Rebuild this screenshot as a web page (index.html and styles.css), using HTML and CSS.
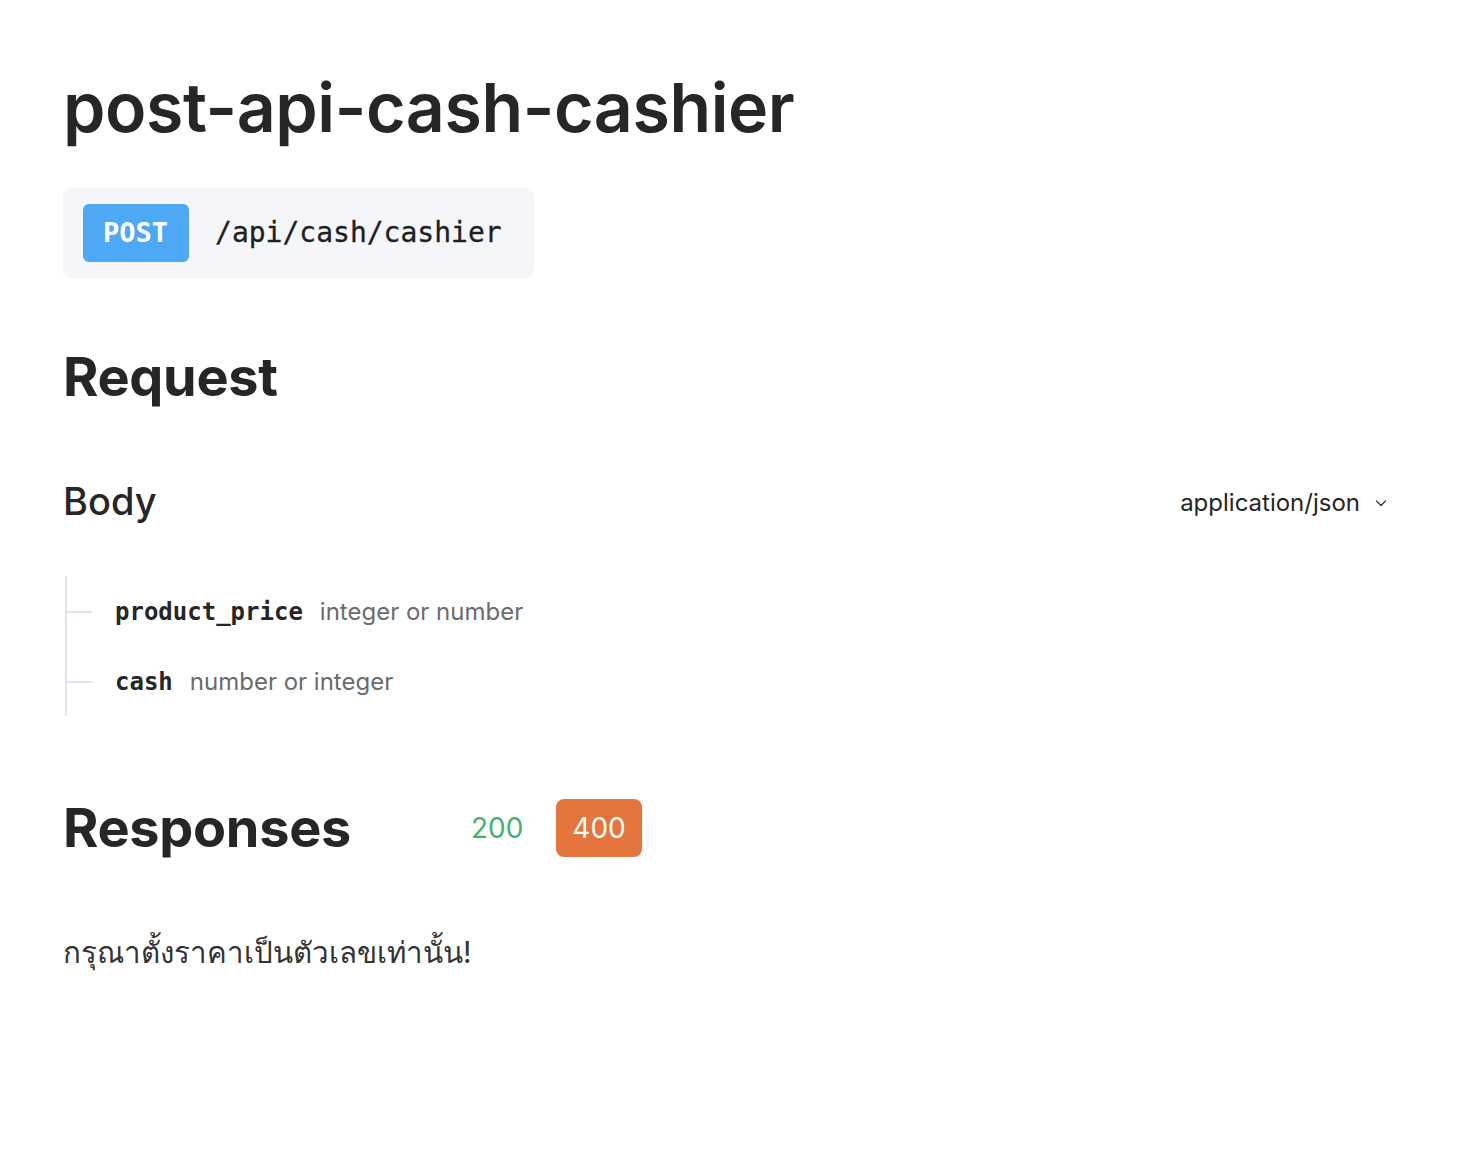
FILE: index.html
```html
<!DOCTYPE html>
<html lang="en">
<head>
<meta charset="utf-8">
<title>post-api-cash-cashier</title>
<link rel="stylesheet" href="styles.css">
</head>
<body>
<main class="page">
  <h1 class="title">post-api-cash-cashier</h1>
  <div class="endpoint">
    <span class="method">POST</span>
    <span class="path">/api/cash/cashier</span>
  </div>

  <h2 class="section">Request</h2>
  <div class="body-head">
    <h3 class="sub">Body</h3>
    <div class="ctype">application/json
      <svg class="chev" width="14" height="14" viewBox="0 0 14 14"><path d="M2.5 5 L7 9.5 L11.5 5" fill="none" stroke="#333" stroke-width="1.2" stroke-linecap="round" stroke-linejoin="round"/></svg>
    </div>
  </div>
  <div class="tree">
    <div class="row"><span class="branch"></span><span class="fname">product_price</span><span class="ftype">integer or number</span></div>
    <div class="row"><span class="branch"></span><span class="fname">cash</span><span class="ftype">number or integer</span></div>
  </div>

  <div class="resp-head">
    <h2 class="section">Responses</h2>
    <div class="codes">
      <span class="code ok">200</span>
      <span class="code err">400</span>
    </div>
  </div>
  <p class="message">กรุณาตั้งราคาเป็นตัวเลขเท่านั้น!</p>
</main>
</body>
</html>
```
FILE: styles.css
```css
html, body { margin: 0; padding: 0; background: #fff; }
body { font-family: Inter, "Noto Sans", sans-serif; color: #262626; }
.page { padding: 67px 80px 0 63px; }
.title { margin: 0; font-size: 68px; font-weight: 600; line-height: 1.2; letter-spacing: -0.4px; color: #262626; }
.endpoint { display: inline-flex; align-items: center; gap: 26px; margin-top: 39px; padding: 16px 32px 16px 20px; background: #f5f6fa; border-radius: 8px; }
.method { display: inline-flex; align-items: center; height: 58px; padding: 0 21px 0 20px; background: #4da9f6; color: #fff; border-radius: 6px; font-family: "DejaVu Sans Mono", monospace; font-weight: 700; font-size: 27px; }
.path { font-family: "DejaVu Sans Mono", monospace; font-size: 28px; font-weight: 500; color: #1f1f1f; -webkit-text-stroke: 0.3px #1f1f1f; }
.section { margin: 0; font-size: 54px; font-weight: 700; line-height: 1.2; color: #262626; letter-spacing: -0.3px; }
.page > .section { margin-top: 67px; }
.body-head { display: flex; justify-content: space-between; align-items: center; margin-top: 70px; }
.sub { margin: 0; font-size: 38px; font-weight: 500; line-height: 1.2; }
.ctype { display: flex; align-items: center; gap: 14px; font-size: 24px; color: #262626; }
.chev { margin-top: 2px; }
.tree { margin-top: 51px; margin-left: 2px; border-left: 2px solid #dfe2ef; padding: 21px 0 19px; display: flex; flex-direction: column; gap: 40px; }
.row { display: flex; align-items: baseline; gap: 17px; line-height: 29px; }
.branch { width: 25px; height: 2px; background: #dfe2ef; align-self: center; margin-right: 6px; }
.fname { font-family: "DejaVu Sans Mono", monospace; font-weight: 700; font-size: 24px; color: #262626; }
.ftype { font-size: 24px; color: #6b6b6b; }
.resp-head { display: flex; align-items: center; margin-top: 80px; }
.codes { display: flex; align-items: center; gap: 17px; margin-left: 104px; }
.code { display: inline-flex; align-items: center; height: 58px; padding: 0 16px; font-size: 28px; border-radius: 8px; }
.code.ok { color: #45b06f; }
.code.err { background: #e4753d; color: #fff; }
.message { margin: 68px 0 0; font-size: 29.5px; color: #333; }
```
